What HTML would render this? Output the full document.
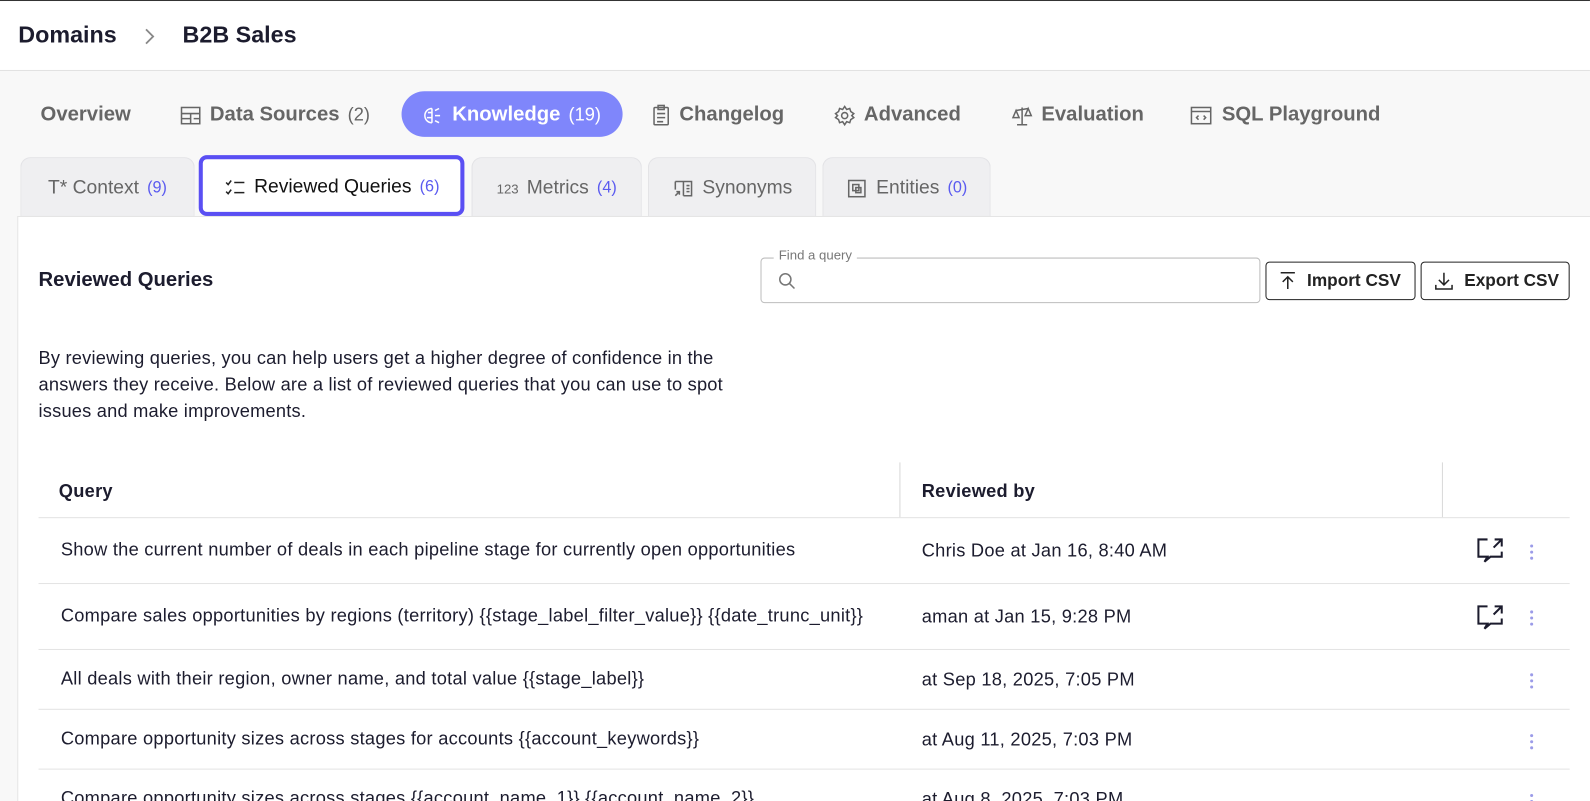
<!DOCTYPE html>
<html><head><style>
*{box-sizing:border-box;margin:0;padding:0}
html,body{width:1590px;height:801px;overflow:hidden;background:#f8f8f8}
body{font-family:"Liberation Sans",sans-serif;position:relative;color:#1b1b2b}
#w{position:absolute;left:0;top:0;width:1568px;height:790px;transform:scale(1.014);transform-origin:0 0}
.abs{position:absolute}
.hdr{left:0;top:0;width:1568px;height:70px;background:#fff;border-top:1px solid #333;border-bottom:1px solid #e2e2e2}
.bc{top:21px;font-size:23px;font-weight:bold;color:#1c1c2e}
.mt{top:102px;font-size:20px;font-weight:bold;color:#666;display:flex;align-items:center;gap:8px;white-space:nowrap}
.mt .c{font-weight:normal;font-size:18px}
.pill{left:396px;top:90px;width:218px;height:45px;background:#7f86fb;border-radius:23px}
.st{top:155px;height:58px;padding-top:3px;background:#efeff1;border:1px solid #e3e3e6;border-bottom:none;border-radius:10px 10px 0 0;display:flex;align-items:center;justify-content:center;gap:8px;font-size:19px;color:#666;white-space:nowrap}
.st .c{color:#5b5bf0;font-size:16px}
.panel{left:17px;top:213px;width:1560px;height:600px;background:#fff;border-left:1px solid #e5e5e5;border-top:1px solid #e5e5e5}
svg{flex:none}
.row{left:38px;width:1510px;border-bottom:1px solid #e3e3e3;font-size:18px;letter-spacing:0.25px;color:#1c1c2e}
.row span{position:absolute;white-space:nowrap}
.dots{position:absolute;left:1509px;width:3px}
.dots i{display:block;width:3px;height:3px;border-radius:50%;background:#9b9be8;margin-bottom:3px}
.btn{top:258px;height:38px;border:1px solid #222;border-radius:4px;display:flex;align-items:center;gap:10px;padding-left:12px;font-size:17px;font-weight:bold;color:#222;white-space:nowrap}
</style></head><body><div id="w">
<div class="abs hdr"></div>
<div class="abs bc" style="left:18px">Domains</div>
<svg class="abs" style="left:140px;top:26px" width="14" height="20" viewBox="0 0 14 20"><path d="M4 3l7 7-7 7" fill="none" stroke="#888" stroke-width="1.8"/></svg>
<div class="abs bc" style="left:180px">B2B Sales</div>

<div class="abs pill"></div>
<div class="abs mt" style="left:40px">Overview</div>
<div class="abs mt" style="left:177px"><svg width="22" height="20" viewBox="0 0 22 20" fill="none" stroke="#666" stroke-width="1.5"><rect x="2" y="2" width="18" height="16"/><path d="M2 8h18M11 8v10M2 13h9M14 13h6"/></svg>Data Sources <span class="c">(2)</span></div>
<div class="abs mt" style="left:416px;color:#fff"><svg width="22" height="20" viewBox="0 0 22 20" fill="none" stroke="#fff" stroke-width="1.5"><path d="M10 3c-4 0-7 3-7 7s3 7 7 7M10 3v14M6 7h4M5 12h5M13 5l4-2M13 10h5M13 15l4 2"/></svg>Knowledge <span class="c" style="color:#fff">(19)</span></div>
<div class="abs mt" style="left:642px"><svg width="20" height="22" viewBox="0 0 20 22" fill="none" stroke="#666" stroke-width="1.5"><rect x="3" y="3" width="14" height="17" rx="1"/><rect x="7" y="1" width="6" height="4"/><path d="M6 9h8M6 13h8M6 17h6"/></svg>Changelog</div>
<div class="abs mt" style="left:822px"><svg width="22" height="22" viewBox="0 0 22 22" fill="none" stroke="#666" stroke-width="1.5"><circle cx="11" cy="11" r="3"/><path d="M11 2l2 3 3-1 1 3 3 2-2 2 2 2-3 2-1 3-3-1-2 3-2-3-3 1-1-3-3-2 2-2-2-2 3-2 1-3 3 1z"/></svg>Advanced</div>
<div class="abs mt" style="left:997px"><svg width="22" height="22" viewBox="0 0 22 22" fill="none" stroke="#666" stroke-width="1.5"><path d="M11 3v17M6 20h10M5 6l12-2M5 6l-3 7h6zM17 4l-3 7h6z"/></svg>Evaluation</div>
<div class="abs mt" style="left:1173px"><svg width="24" height="22" viewBox="0 0 24 22" fill="none" stroke="#666" stroke-width="1.5"><rect x="2" y="3" width="19" height="16"/><path d="M2 7h19M9 11l-2 2 2 2M14 11l2 2-2 2"/></svg>SQL Playground</div>

<div class="abs st" style="left:20px;width:172px">T* Context <span class="c">(9)</span></div>
<div class="abs st" style="left:196px;width:262px;height:60px;top:153px;background:#fff;border:4px solid #5a4ff3;border-radius:8px;color:#111"><svg width="22" height="18" viewBox="0 0 22 18" fill="none" stroke="#222" stroke-width="1.5"><path d="M2 4l2 2 3-4M2 13l2 2 3-4M10 4h10M10 14h10"/></svg>Reviewed Queries <span class="c">(6)</span></div>
<div class="abs st" style="left:465px;width:168px"><span style="font-size:13px">123</span> Metrics <span class="c">(4)</span></div>
<div class="abs st" style="left:639px;width:166px"><svg width="22" height="20" viewBox="0 0 22 20" fill="none" stroke="#666" stroke-width="1.5"><path d="M3 3h16v14h-8M11 3v14M14 7h3M14 10h3M14 13h3M3 3v8M3 17l4-4M4 13h3v3"/></svg>Synonyms</div>
<div class="abs st" style="left:811px;width:166px"><svg width="22" height="22" viewBox="0 0 22 22" fill="none" stroke="#666" stroke-width="1.5"><rect x="3" y="3" width="16" height="16"/><rect x="7" y="7" width="6" height="6"/><rect x="10" y="10" width="5" height="5"/></svg>Entities <span class="c">(0)</span></div>

<div class="abs panel"></div>
<div class="abs" style="left:38px;top:265px;font-size:20px;font-weight:bold;color:#1c1c2e">Reviewed Queries</div>
<div class="abs" style="left:750px;top:254px;width:493px;height:45px;border:1px solid #bdbdbd;border-radius:4px"></div>
<div class="abs" style="left:763px;top:244px;background:#fff;padding:0 5px;font-size:13px;color:#777">Find a query</div>
<svg class="abs" style="left:767px;top:268px" width="18" height="18" viewBox="0 0 18 18" fill="none" stroke="#777" stroke-width="1.5"><circle cx="7.5" cy="7.5" r="5.5"/><path d="M11.5 11.5l5 5"/></svg>
<div class="abs btn" style="left:1248px;width:148px"><svg width="18" height="20" viewBox="0 0 18 20" fill="none" stroke="#222" stroke-width="1.5"><path d="M2 2h14M9 18V6M4 11l5-5 5 5"/></svg>Import CSV</div>
<div class="abs btn" style="left:1401px;width:147px"><svg width="20" height="20" viewBox="0 0 20 20" fill="none" stroke="#222" stroke-width="1.5"><path d="M10 2v12M5 9l5 5 5-5M2 14v4h16v-4"/></svg>Export CSV</div>
<div class="abs" style="left:38px;top:340px;width:700px;font-size:18px;letter-spacing:0.2px;line-height:26px;color:#1c1c2e">By reviewing queries, you can help users get a higher degree of confidence in the answers they receive. Below are a list of reviewed queries that you can use to spot issues and make improvements.</div>

<div class="abs row" style="top:456px;height:55px;font-weight:bold"><span style="left:20px;top:18px">Query</span><span style="left:871px;top:18px">Reviewed by</span></div>
<div class="abs" style="left:887px;top:456px;width:1px;height:54px;background:#d8d8d8"></div>
<div class="abs" style="left:1422px;top:456px;width:1px;height:54px;background:#d8d8d8"></div>
<div class="abs row" style="top:511px;height:65px"><span style="left:22px;top:21px">Show the current number of deals in each pipeline stage for currently open opportunities</span><span style="left:871px;top:22px">Chris Doe at Jan 16, 8:40 AM</span></div>
<div class="abs row" style="top:576px;height:65px"><span style="left:22px;top:21px">Compare sales opportunities by regions (territory) {{stage_label_filter_value}} {{date_trunc_unit}}</span><span style="left:871px;top:22px">aman at Jan 15, 9:28 PM</span></div>
<div class="abs row" style="top:641px;height:59px"><span style="left:22px;top:18px">All deals with their region, owner name, and total value {{stage_label}}</span><span style="left:871px;top:19px">at Sep 18, 2025, 7:05 PM</span></div>
<div class="abs row" style="top:700px;height:59px"><span style="left:22px;top:18px">Compare opportunity sizes across stages for accounts {{account_keywords}}</span><span style="left:871px;top:19px">at Aug 11, 2025, 7:03 PM</span></div>
<div class="abs row" style="top:759px;height:59px;border:none"><span style="left:22px;top:18px">Compare opportunity sizes across stages {{account_name_1}} {{account_name_2}}</span><span style="left:871px;top:19px">at Aug 8, 2025, 7:03 PM</span></div>

<svg class="abs" style="left:1455px;top:530px" width="30" height="26" viewBox="0 0 30 26" fill="none" stroke="#1c1c2e" stroke-width="2"><path d="M12 2H3v17h9l-3 5 6-5h11v-5M19 2h7v7M26 2l-8 8"/></svg>
<svg class="abs" style="left:1455px;top:596px" width="30" height="26" viewBox="0 0 30 26" fill="none" stroke="#1c1c2e" stroke-width="2"><path d="M12 2H3v17h9l-3 5 6-5h11v-5M19 2h7v7M26 2l-8 8"/></svg>
<div class="dots" style="top:537px"><i></i><i></i><i></i></div>
<div class="dots" style="top:602px"><i></i><i></i><i></i></div>
<div class="dots" style="top:664px"><i></i><i></i><i></i></div>
<div class="dots" style="top:724px"><i></i><i></i><i></i></div>
<div class="dots" style="top:783px"><i></i><i></i><i></i></div>
</div></body></html>
